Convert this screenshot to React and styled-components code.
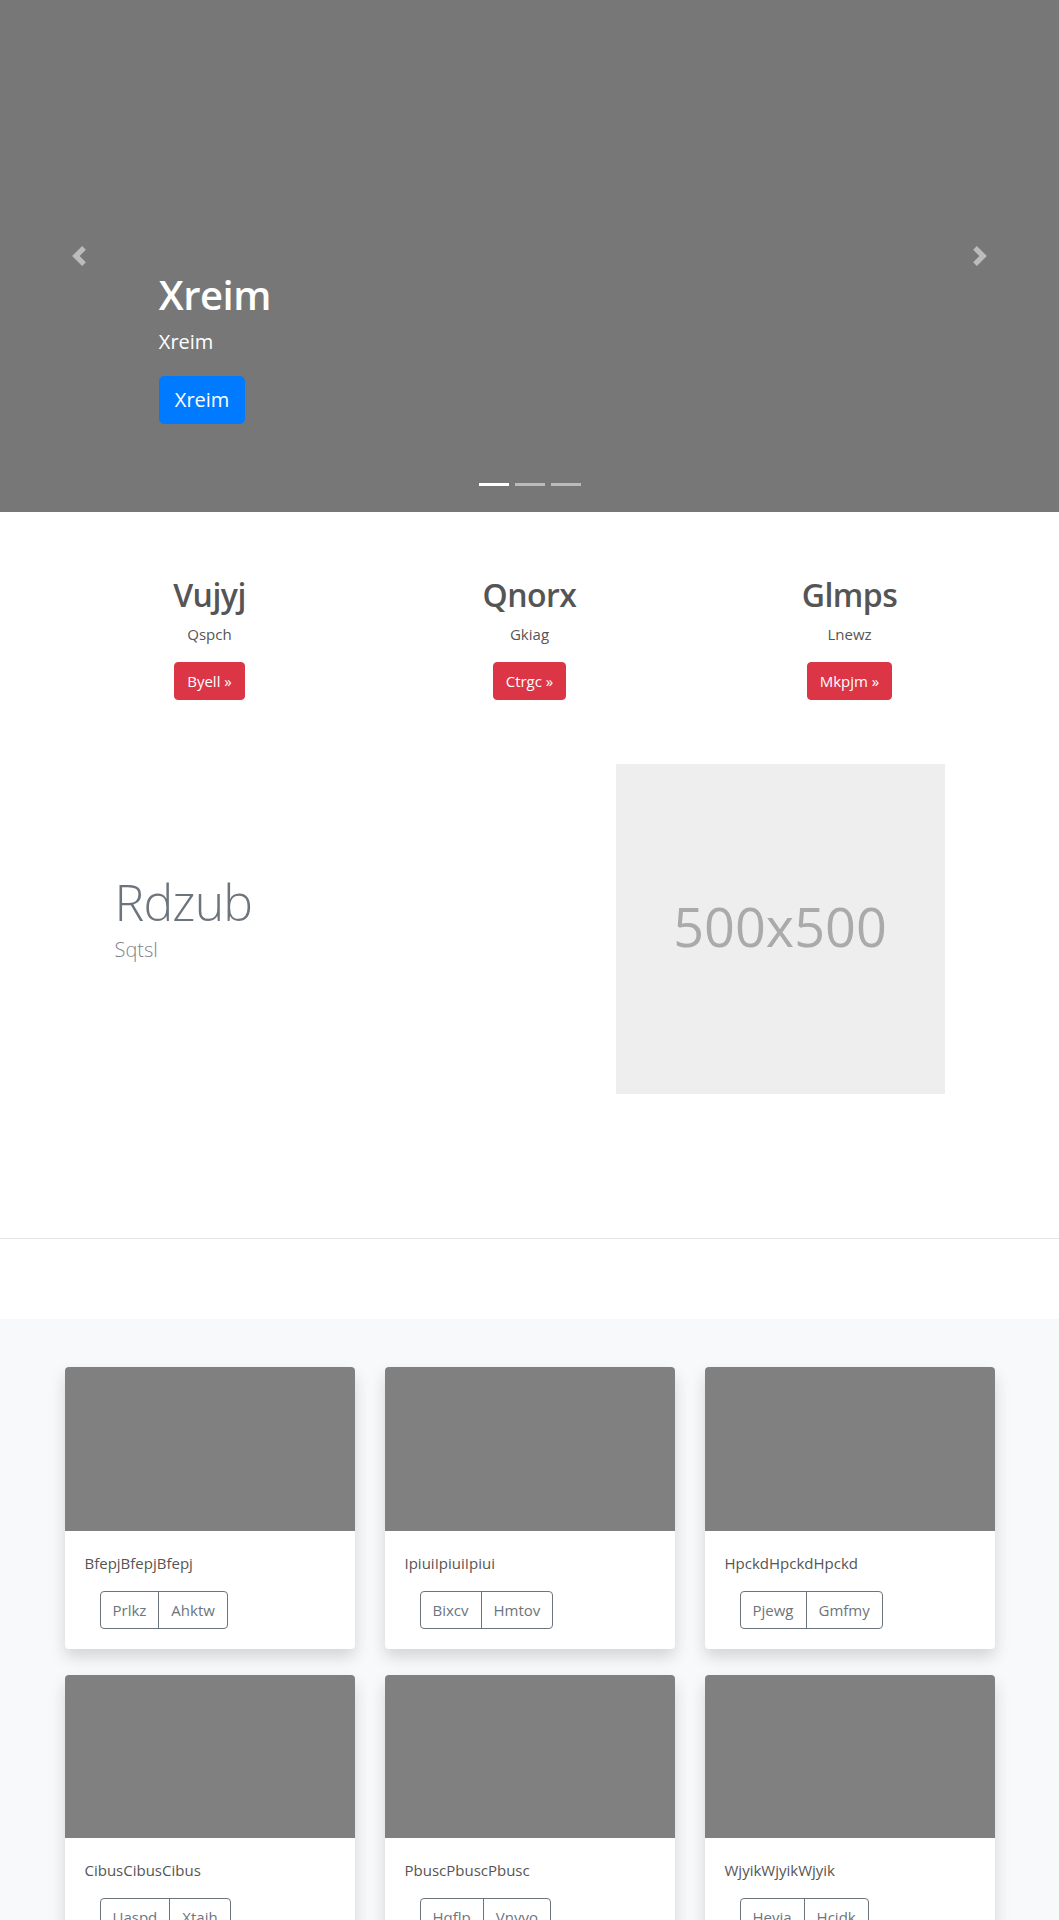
import React from 'react'
import styled, { createGlobalStyle } from 'styled-components'

const GlobalStyle = createGlobalStyle`
    * { box-sizing: border-box; }
    body {
        margin: 0;
        font-family: "Open Sans", "Noto Sans", sans-serif;
        font-size: 16px;
        line-height: 1.5;
        color: #212529;
        background: #fff;
    }
`

const marketing = [
    { title: 'Vujyj', text: 'Qspch', action: 'Byell' },
    { title: 'Qnorx', text: 'Gkiag', action: 'Ctrgc' },
    { title: 'Glmps', text: 'Lnewz', action: 'Mkpjm' },
]

const albums = [
    { text: 'BfepjBfepjBfepj', buttons: ['Prlkz', 'Ahktw'] },
    { text: 'IpiuiIpiuiIpiui', buttons: ['Bixcv', 'Hmtov'] },
    { text: 'HpckdHpckdHpckd', buttons: ['Pjewg', 'Gmfmy'] },
    { text: 'CibusCibusCibus', buttons: ['Uaspd', 'Xtaih'] },
    { text: 'PbuscPbuscPbusc', buttons: ['Hqflp', 'Vnyvo'] },
    { text: 'WjyikWjyikWjyik', buttons: ['Hevia', 'Hcidk'] },
]

const Chevron = ({ next }) => (
    <svg width="20" height="20" viewBox="0 0 8 8" fill="#fff">
        {next
            ? <path d="M2.75 0l-1.5 1.5L3.75 4l-2.5 2.5L2.75 8l4-4-4-4z" />
            : <path d="M5.25 0l-4 4 4 4 1.5-1.5L4.25 4l2.5-2.5L5.25 0z" />}
    </svg>
)

export default function App() {
    return (
        <>
            <GlobalStyle />
            <Carousel>
                <Control side="left"><Chevron /></Control>
                <Caption>
                    <CaptionTitle>Xreim</CaptionTitle>
                    <CaptionLead>Xreim</CaptionLead>
                    <PrimaryButton>Xreim</PrimaryButton>
                </Caption>
                <Control side="right"><Chevron next /></Control>
                <Indicators>
                    {[0, 1, 2].map(i => <Indicator key={i} active={i === 0} />)}
                </Indicators>
            </Carousel>

            <Container>
                <MarketingRow>
                    {marketing.map(m => (
                        <MarketingCol key={m.title}>
                            <MarketingTitle>{m.title}</MarketingTitle>
                            <MarketingText>{m.text}</MarketingText>
                            <DangerButton>{m.action} &raquo;</DangerButton>
                        </MarketingCol>
                    ))}
                </MarketingRow>

                <Featurette>
                    <div>
                        <FeaturetteHeading>Rdzub</FeaturetteHeading>
                        <FeaturetteLead>Sqtsl</FeaturetteLead>
                    </div>
                    <Placeholder>500x500</Placeholder>
                </Featurette>
            </Container>

            <Divider />

            <Album>
                <Container>
                    <CardGrid>
                        {albums.map(a => (
                            <Card key={a.text}>
                                <Thumb />
                                <CardBody>
                                    <CardText>{a.text}</CardText>
                                    <ButtonGroup>
                                        {a.buttons.map(b => <OutlineButton key={b}>{b}</OutlineButton>)}
                                    </ButtonGroup>
                                </CardBody>
                            </Card>
                        ))}
                    </CardGrid>
                </Container>
            </Album>
        </>
    )
}

const Carousel = styled.div`
    position: relative;
    height: 512px;
    background: #777;
    display: flex;
    align-items: flex-end;
`

const Control = styled.div`
    position: absolute;
    top: 0;
    bottom: 0;
    ${p => p.side}: 0;
    width: 15%;
    display: flex;
    align-items: center;
    justify-content: center;
    opacity: .5;
`

const Caption = styled.div`
    padding: 0 15% 88px;
    color: #fff;
`

const CaptionTitle = styled.h1`
    margin: 0 0 8px;
    font-size: 40px;
    font-weight: 600;
    line-height: 1.2;
    letter-spacing: -.5px;
`

const CaptionLead = styled.p`
    margin: 0 0 19px;
    font-size: 20px;
    line-height: 1.5;
`

const PrimaryButton = styled.button`
    display: block;
    padding: 8px 15px;
    font-family: inherit;
    font-size: 20px;
    line-height: 1.5;
    color: #fff;
    background: #007bff;
    border: 1px solid #007bff;
    border-radius: 5px;
`

const Indicators = styled.div`
    position: absolute;
    left: 0;
    right: 0;
    bottom: 26px;
    display: flex;
    justify-content: center;
`

const Indicator = styled.span`
    width: 30px;
    height: 3px;
    margin: 0 3px;
    background: #fff;
    opacity: ${p => (p.active ? 1 : .5)};
`

const Container = styled.div`
    max-width: 960px;
    margin: 0 auto;
    padding: 0 15px;
`

const MarketingRow = styled.div`
    display: grid;
    grid-template-columns: repeat(3, 1fr);
    margin: 64px -15px 0;
`

const MarketingCol = styled.div`
    padding: 0 15px;
    margin-bottom: 24px;
    text-align: center;
    color: #555;
`

const MarketingTitle = styled.h2`
    margin: 0 0 8px;
    font-size: 32px;
    font-weight: 600;
    line-height: 1.2;
    letter-spacing: -.5px;
`

const MarketingText = styled.p`
    margin: 0 0 16px;
    font-size: 15px;
    line-height: 24px;
`

const DangerButton = styled.button`
    padding: 6px 12px;
    font-family: inherit;
    font-size: 15px;
    line-height: 24px;
    color: #fff;
    background: #dc3545;
    border: 1px solid #dc3545;
    border-radius: 4px;
`

const Featurette = styled.div`
    display: grid;
    grid-template-columns: 1fr 329px;
    align-items: center;
    margin-top: 40px;
    padding: 0 50px;
`

const FeaturetteHeading = styled.h2`
    margin: 0 0 8px;
    font-size: 50px;
    font-weight: 300;
    line-height: 1;
    letter-spacing: -.05rem;
    color: #6c757d;
`

const FeaturetteLead = styled.p`
    margin: 0 0 16px;
    font-size: 20px;
    font-weight: 300;
    line-height: 1.5;
    color: #7d848a;
`

const Placeholder = styled.div`
    height: 330px;
    display: flex;
    align-items: center;
    justify-content: center;
    padding-bottom: 6px;
    background: #eee;
    color: #aaa;
    font-size: 54px;
`

const Divider = styled.hr`
    margin: 144px 0 80px;
    border: 0;
    border-top: 1px solid #e5e5e5;
`

const Album = styled.section`
    background: #f8f9fa;
    padding: 48px 0;
`

const CardGrid = styled.div`
    display: grid;
    grid-template-columns: repeat(3, 1fr);
    column-gap: 30px;
`

const Card = styled.div`
    margin-bottom: 26px;
    background: #fff;
    border-radius: 4px;
    overflow: hidden;
    box-shadow: 0 8px 16px rgba(0, 0, 0, .15);
`

const Thumb = styled.div`
    aspect-ratio: 16 / 9;
    background: #808080;
`

const CardBody = styled.div`
    padding: 20px;
`

const CardText = styled.p`
    margin: 0 0 16px;
    font-size: 15px;
    line-height: 24px;
    color: #555;
`

const ButtonGroup = styled.div`
    display: inline-flex;
    margin-left: 15px;
    border: 1px solid #6c757d;
    border-radius: 4px;
    overflow: hidden;
`

const OutlineButton = styled.button`
    padding: 6px 12px;
    font-family: inherit;
    font-size: 15px;
    line-height: 24px;
    color: #6c757d;
    background: transparent;
    border: 0;
    & + & {
        border-left: 1px solid #6c757d;
    }
`
